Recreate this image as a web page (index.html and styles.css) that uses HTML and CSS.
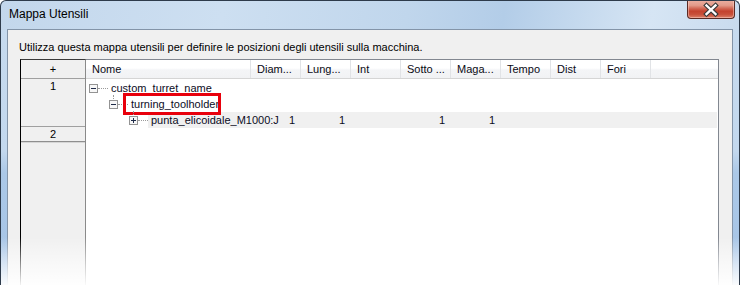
FILE: index.html
```html
<!DOCTYPE html>
<html lang="it">
<head>
<meta charset="utf-8">
<title>Mappa Utensili</title>
<link rel="stylesheet" href="styles.css">
</head>
<body>
<div class="window">
  <div class="titlebar">
    <span class="title">Mappa Utensili</span>
    <div class="close" aria-label="Chiudi">
      <svg width="46" height="18" viewBox="0 0 46 18">
        <path d="M18.5 5.5 L27.5 14 M27.5 5.5 L18.5 14" stroke="#3a3a3a" stroke-width="4.6" stroke-linecap="square" fill="none"/>
        <path d="M18.5 5.5 L27.5 14 M27.5 5.5 L18.5 14" stroke="#ffffff" stroke-width="2.4" stroke-linecap="square" fill="none"/>
      </svg>
    </div>
  </div>
  <div class="client">
    <p class="desc">Utilizza questa mappa utensili per definire le posizioni degli utensili sulla macchina.</p>
    <div class="grid">
      <div class="rowheads">
        <div class="rh-head">+</div>
        <div class="rh-cell rh-1">1</div>
        <div class="rh-cell rh-2">2</div>
        <div class="rh-rest"></div>
      </div>
      <div class="list">
        <div class="list-head">
          <div class="col col-name">Nome</div>
          <div class="col">Diam...</div>
          <div class="col">Lung...</div>
          <div class="col">Int</div>
          <div class="col">Sotto ...</div>
          <div class="col">Maga...</div>
          <div class="col">Tempo</div>
          <div class="col">Dist</div>
          <div class="col">Fori</div>
          <div class="col col-fill"></div>
        </div>
        <div class="rows">
          <div class="row lvl0">
            <span class="exp"><svg width="9" height="9" viewBox="0 0 9 9"><rect x="0.5" y="0.5" width="8" height="8" fill="#f7f7f7" stroke="#939393"/><path d="M2 4.5 H7" stroke="#1e2a48" stroke-width="1"/></svg></span>
            <span class="conn"></span>
            <span class="label">custom_turret_name</span>
          </div>
          <div class="row lvl1">
            <span class="exp child"><svg width="9" height="9" viewBox="0 0 9 9"><rect x="0.5" y="0.5" width="8" height="8" fill="#f7f7f7" stroke="#939393"/><path d="M2 4.5 H7" stroke="#1e2a48" stroke-width="1"/></svg></span>
            <span class="conn"></span>
            <span class="label marked">turning_toolholder</span>
          </div>
          <div class="row lvl2">
            <span class="exp child"><svg width="9" height="9" viewBox="0 0 9 9"><rect x="0.5" y="0.5" width="8" height="8" fill="#f7f7f7" stroke="#939393"/><path d="M2 4.5 H7 M4.5 2 V7" stroke="#1e2a48" stroke-width="1"/></svg></span>
            <span class="conn"></span>
            <div class="sel">
              <span class="label label-fixed">punta_elicoidale_M1000:J</span>
              <span class="val">1</span>
              <span class="val">1</span>
              <span class="val"></span>
              <span class="val">1</span>
              <span class="val">1</span>
            </div>
          </div>
        </div>
      </div>
    </div>
  </div>
  <div class="fade"></div>
</div>
</body>
</html>
```
FILE: styles.css
```css
html, body {
  margin: 0;
  padding: 0;
  background: #ffffff;
}

body {
  font-family: "Liberation Sans", Arial, sans-serif;
  font-size: 11px;
  color: #000000;
}

.window {
  position: relative;
  width: 740px;
  height: 285px;
  box-sizing: border-box;
  border: 1px solid #2e3b4b;
  border-bottom: 0;
  border-radius: 6px 6px 0 0;
  padding: 0 6px;
  display: flex;
  flex-direction: column;
  overflow: hidden;
  background:
    linear-gradient(100deg, #c3d7ec 0%, #cddff1 30%, #c0d6ec 55%, #b3cde8 68%, #d6e5f4 88%, #c9dbee 100%) top left / 100% 29px no-repeat,
    linear-gradient(180deg, #c7dbef 0px, #c3d8ee 150px, #abc8e7 172px, #a6c4e6 285px);
}

.titlebar {
  height: 28px;
  flex: none;
  display: flex;
  justify-content: space-between;
  align-items: flex-start;
}

.title {
  margin: 6px 0 0 2px;
  font-family: "Liberation Sans", Arial, sans-serif;
  font-size: 12px;
  line-height: 15px;
  color: #000000;
}

.close {
  margin: -1px -2px 0 0;
  width: 48px;
  height: 19px;
  box-sizing: border-box;
  border: 1px solid #5a2a24;
  border-top: 0;
  border-radius: 0 0 4px 4px;
  background: linear-gradient(180deg, #ecb0a2 0%, #e39a89 30%, #d16552 48%, #c4422e 62%, #c8503a 80%, #dc8069 100%);
  box-shadow: inset 0 0 0 1px rgba(255, 220, 210, 0.45);
  display: flex;
  align-items: flex-start;
  justify-content: center;
}

.close svg {
  display: block;
}

.client {
  flex: 1;
  display: flex;
  flex-direction: column;
  border: 1px solid #8394a8;
  border-bottom: 0;
  background: #f0f0f0;
  min-height: 0;
}

.desc {
  margin: 11px 0 0 11px;
  line-height: 13px;
}

.grid {
  margin: 5px 0 0 12px;
  width: 699px;
  flex: 1;
  display: flex;
}

.rowheads {
  width: 64px;
  border-left: 1px solid #000000;
  border-right: 1px solid #8a8a8a;
  border-top: 1px solid #3a3a3a;
  background: #f0f0f0;
  display: flex;
  flex-direction: column;
  text-align: center;
}

.rh-head {
  height: 18px;
  line-height: 18px;
  border-bottom: 1px solid #a0a0a0;
}

.rh-cell {
  border-bottom: 1px solid #a0a0a0;
}

.rh-1 {
  height: 47px;
  line-height: 14px;
}

.rh-2 {
  height: 14px;
  line-height: 14px;
  border-bottom-color: #8f8f8f;
  box-shadow: 0 1px 0 #d6d6d6;
}

.rh-rest {
  flex: 1;
}

.list {
  flex: 1;
  background: #ffffff;
  border-top: 1px solid #828790;
  border-right: 1px solid #828790;
  display: flex;
  flex-direction: column;
}

.list-head {
  height: 18px;
  display: flex;
  border-bottom: 1px solid #d5d5d5;
  background: linear-gradient(180deg, #ffffff 0%, #ffffff 45%, #f4f5f7 55%, #f1f2f4 100%);
}

.col {
  width: 49px;
  border-right: 1px solid #e1e3e6;
  padding: 1px 0 0 6px;
  box-sizing: content-box;
  line-height: 17px;
  white-space: nowrap;
  overflow: hidden;
  color: #0a0a14;
}

.col + .col {
  width: 43px;
}

.col-name {
  width: 158px;
}

.col.col-fill {
  flex: 1;
  width: auto;
  border-right: 0;
  padding: 0;
}

.rows {
  padding-top: 1px;
  display: flex;
  flex-direction: column;
}

.row {
  height: 16px;
  display: flex;
  align-items: flex-start;
  line-height: 16px;
  color: #0c0c1e;
}

.lvl0 { padding-left: 3px; }
.lvl1 { padding-left: 23px; }
.lvl2 { padding-left: 43px; }

.exp {
  position: relative;
  margin-top: 4px;
  width: 9px;
  height: 9px;
  flex: none;
}

.exp svg {
  display: block;
}

.exp.child::before {
  content: "";
  position: absolute;
  left: 4px;
  top: -5px;
  height: 4px;
  border-left: 1px dotted #9a9a9a;
}

.conn {
  flex: none;
  width: 10px;
  margin-top: 8px;
  border-top: 1px dotted #9a9a9a;
}

.label {
  padding-left: 3px;
  white-space: nowrap;
}

.marked {
  position: relative;
}

.marked::after {
  content: "";
  position: absolute;
  left: -5px;
  top: -3px;
  width: 98px;
  height: 22px;
  box-sizing: border-box;
  border: 3px solid #e8000c;
}

.sel {
  flex: 1;
  display: flex;
  margin-right: 1px;
  background: #f0f0f0;
}

.label-fixed {
  width: 137px;
}

.val {
  width: 49px;
  padding-left: 1px;
}

.fade {
  position: absolute;
  left: -1px;
  right: -1px;
  bottom: 0;
  height: 48px;
  background: linear-gradient(180deg, rgba(255, 255, 255, 0) 0%, rgba(255, 255, 255, 0.55) 55%, rgba(255, 255, 255, 0.95) 100%);
  pointer-events: none;
}
```
